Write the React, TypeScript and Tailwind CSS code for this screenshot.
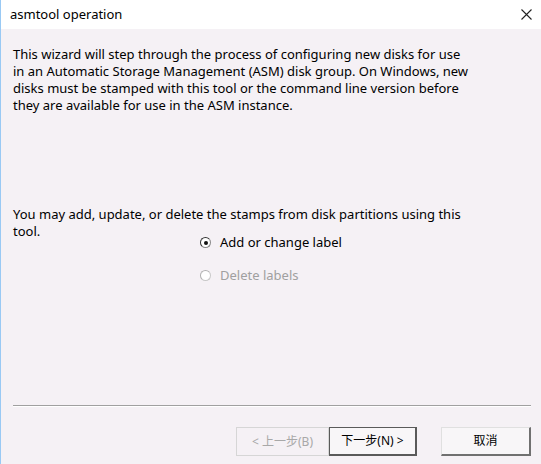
import React from "react";

const font = { fontFamily: '"Noto Sans", "Noto Sans CJK SC", sans-serif' };

function Radio({ checked, disabled }: { checked?: boolean; disabled?: boolean }) {
    return (
        <span
            className={`inline-flex items-center justify-center w-[11px] h-[11px] rounded-full border bg-white ${
                disabled ? "border-[#c8c8c8] border-t-[#b0b0b0] border-l-[#b0b0b0]" : "border-[#888] border-t-[#333] border-l-[#333]"
            }`}
        >
            {checked && <span className="w-[4px] h-[4px] rounded-full bg-[#111]" />}
        </span>
    );
}

export default function App() {
    return (
        <div
            className="w-[541px] h-[464px] flex flex-col bg-[#f5f1f5] border-l border-[#99c9f4] text-[13px] text-black overflow-hidden"
            style={font}
        >
            {/* Title bar */}
            <div className="h-[29px] bg-white flex items-center justify-between pl-[9px] pr-[9px]">
                <span className="leading-none">asmtool operation</span>
                <svg width="11" height="11" viewBox="0 0 11 11" className="text-[#222]">
                    <path d="M0.5 0.5 L10.5 10.5 M10.5 0.5 L0.5 10.5" stroke="currentColor" strokeWidth="1.1" />
                </svg>
            </div>

            {/* Body */}
            <div className="flex-1 flex flex-col pl-[12px] pr-[10px]">
                <p className="mt-[17px] leading-[17px]">
                    This wizard will step through the process of configuring new disks for use
                    <br />
                    in an Automatic Storage Management (ASM) disk group. On Windows, new
                    <br />
                    disks must be stamped with this tool or the command line version before
                    <br />
                    they are available for use in the ASM instance.
                </p>

                <p className="mt-[92px] leading-[17px]">
                    You may add, update, or delete the stamps from disk partitions using this
                    <br />
                    tool.
                </p>

                <div className="-mt-[6px] ml-[187px] flex flex-col gap-[16px]">
                    <label className="flex items-center gap-[9px] leading-[17px]">
                        <Radio checked />
                        <span>Add or change label</span>
                    </label>
                    <label className="flex items-center gap-[9px] leading-[17px] text-[#a0a0a0]">
                        <Radio disabled />
                        <span>Delete labels</span>
                    </label>
                </div>

                <div className="flex-1" />

                <div className="border-t border-[#a0a0a0] border-b border-b-white" />

                <div className="flex justify-end items-center mt-[20px] mb-[8px]">
                    <button
                        disabled
                        className="w-[93px] h-[29px] border border-[#d6d6d6] bg-[#f5f1f5] text-[#a8a8a8] text-[12px]"
                    >
                        &lt; 上一步(B)
                    </button>
                    <button className="w-[88px] h-[29px] border border-[#5a5a5a] border-r-2 border-b-2 bg-[#f8f6f8] text-[12px]">
                        下一步(N) &gt;
                    </button>
                    <button className="ml-[24px] w-[90px] h-[29px] border border-[#e0e0e0] border-r-[#707070] border-b-[#707070] border-r-2 border-b-2 bg-[#f8f6f8] text-[12px]">
                        取消
                    </button>
                </div>
            </div>
        </div>
    );
}
